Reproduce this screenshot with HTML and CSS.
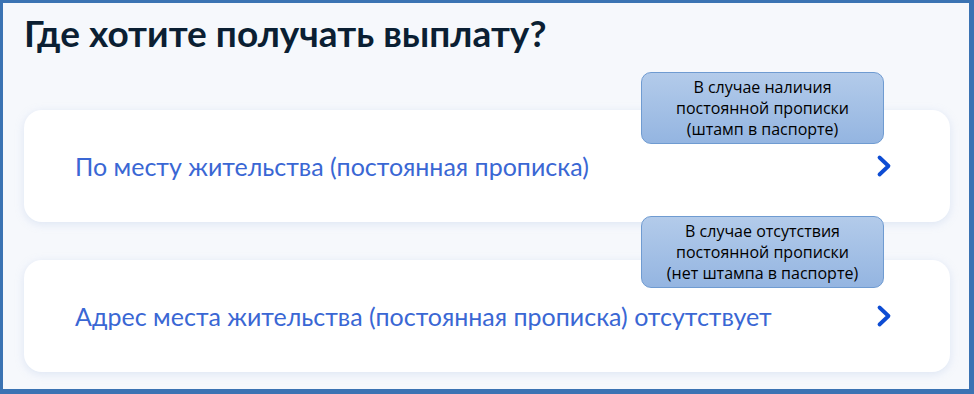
FILE: index.html
```html
<!DOCTYPE html>
<html lang="ru">
<head>
    <meta charset="UTF-8">
    <meta name="viewport" content="width=device-width, initial-scale=1.0">
    <title>Где хотите получать выплату?</title>
    <link rel="stylesheet" href="styles.css">
</head>
<body>
    <div class="frame">
        <h1 class="title">Где хотите получать выплату?</h1>

        <div class="options">
            <a class="option" href="#">
                <span>По месту жительства (постоянная прописка)</span>
                <svg class="chevron" width="16" height="24" viewBox="0 0 16 24"><path d="M3.5 3.5 L12.5 12 L3.5 20.5" fill="none" stroke="#0d4cd3" stroke-width="3.8" stroke-linecap="round" stroke-linejoin="round"/></svg>
            </a>
            <a class="option" href="#">
                <span>Адрес места жительства (постоянная прописка) отсутствует</span>
                <svg class="chevron" width="16" height="24" viewBox="0 0 16 24"><path d="M3.5 3.5 L12.5 12 L3.5 20.5" fill="none" stroke="#0d4cd3" stroke-width="3.8" stroke-linecap="round" stroke-linejoin="round"/></svg>
            </a>
        </div>

        <div class="note note-first">В случае наличия<br>постоянной прописки<br>(штамп в паспорте)</div>
        <div class="note note-second">В случае отсутствия<br>постоянной прописки<br>(нет штампа в паспорте)</div>
    </div>
</body>
</html>
```

FILE: styles.css
```css
html, body {
    margin: 0;
    padding: 0;
}
body {
    font-family: Lato, "Open Sans", sans-serif;
    background-color: #ffffff;
}
.frame {
    position: relative;
    box-sizing: border-box;
    width: 974px;
    height: 394px;
    border-style: solid;
    border-color: #3b73b3;
    border-width: 3px 5px 5px 3px;
    background-color: #f6f8fc;
    padding: 8px 19px 0 21px;
    overflow: hidden;
}
.title {
    margin: 0;
    font-size: 37px;
    line-height: 44px;
    font-weight: 700;
    color: #0b1f33;
}
.options {
    margin-top: 55px;
    display: flex;
    flex-direction: column;
    gap: 38px;
}
.option {
    display: flex;
    align-items: center;
    justify-content: space-between;
    height: 112px;
    box-sizing: border-box;
    padding: 0 58px 0 51px;
    background-color: #ffffff;
    border-radius: 18px;
    box-shadow: 0 2px 8px rgba(176, 194, 230, 0.35);
    text-decoration: none;
    color: #3a67d4;
    font-size: 25px;
}
.chevron {
    display: block;
}
.note {
    position: absolute;
    left: 638px;
    width: 243px;
    height: 72px;
    border: 1px solid #6f9bd1;
    border-radius: 10px;
    background: linear-gradient(#b3cbea, #94b5e1);
    font-family: "Open Sans", "Liberation Sans", sans-serif;
    font-size: 16px;
    line-height: 21px;
    color: #000000;
    text-align: center;
    padding-top: 4px;
    box-sizing: border-box;
}
.note-first {
    top: 69px;
}
.note-second {
    top: 213px;
}
```
